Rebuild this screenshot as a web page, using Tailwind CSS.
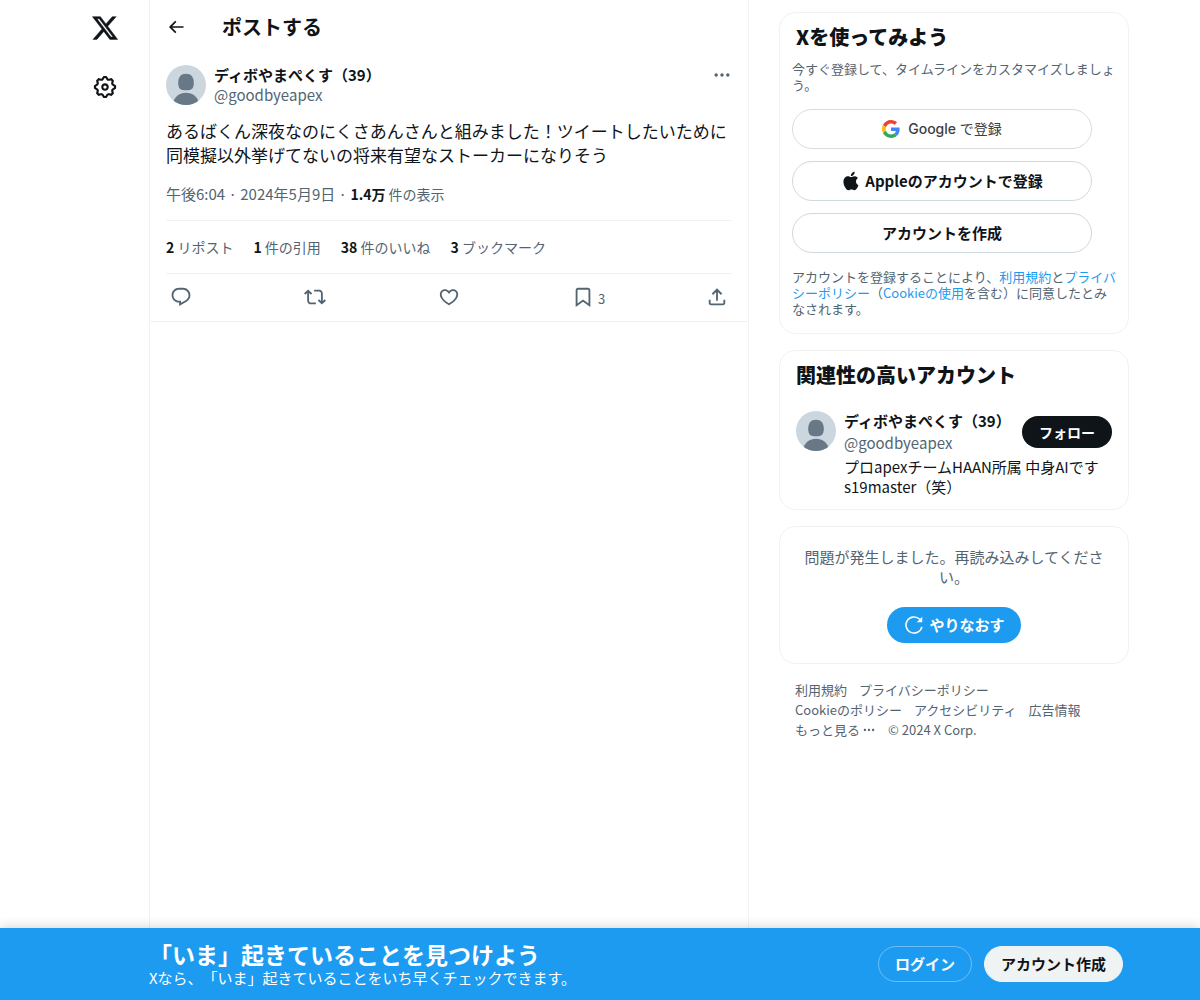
<!DOCTYPE html>
<html lang="ja">
<head>
<meta charset="utf-8">
<meta name="viewport" content="width=device-width, initial-scale=1">
<title>ポストする / X</title>
<script src="https://cdn.jsdelivr.net/npm/@tailwindcss/browser@4"></script>
</head>
<body class="flex min-h-screen flex-col bg-white font-['Noto_Sans_CJK_JP',sans-serif] text-[15px] leading-5 text-[#0f1419] [text-spacing-trim:space-all]">

<svg class="hidden" aria-hidden="true">
  <symbol id="avatar" viewBox="0 0 40 40">
    <rect width="40" height="40" fill="#cbd6df"/>
    <path d="M20 8.800c5 0 7.800 3.200 7.800 9.200 0 5.300-2 7.300-7.800 7.300s-7.800-2-7.800-7.300C12.200 12 15 8.800 20 8.800Z" fill="#687886"/>
    <path d="M7 38C8.500 31.500 13.500 27.700 20 27.700S31.500 31.500 33 38v2H7Z" fill="#687886"/>
  </symbol>
</svg>

<div class="mx-auto flex w-full max-w-[1058px] grow">
  <nav class="flex w-[78px] shrink-0 flex-col">
    <div class="flex w-[68px] flex-col items-center gap-8 pt-3.5">
      <a href="#" aria-label="X">
        <svg class="size-7" viewBox="0 0 24 24" fill="currentColor" stroke="currentColor" stroke-width=".4"><path d="M18.244 2.250h3.308l-7.227 8.260 8.502 11.240H16.170l-5.214-6.817L4.990 21.750H1.680l7.730-8.835L1.254 2.250H8.080l4.713 6.231zm-1.161 17.520h1.833L7.084 4.126H5.117z"/></svg>
      </a>
      <a href="#" aria-label="設定">
        <svg class="size-[26px]" viewBox="0 0 24 24" fill="currentColor"><path d="M10.540 1.750h2.920l1.570 2.360c.11.170.32.250.53.210l2.530-.59 2.170 2.170-.58 2.540c-.05.200.040.410.210.530l2.360 1.570v2.920l-2.360 1.570c-.17.120-.26.330-.21.530l.58 2.540-2.170 2.170-2.530-.59c-.21-.04-.42.040-.53.210l-1.570 2.360h-2.920l-1.580-2.360c-.11-.17-.32-.25-.52-.21l-2.540.59-2.170-2.170.58-2.540c.050-.2-.03-.41-.21-.53l-2.350-1.570v-2.920L4.100 8.970c.18-.12.260-.33.210-.53L3.730 5.900 5.900 3.730l2.540.59c.2.040.41-.04.520-.21l1.580-2.360zm1.070 2l-.98 1.470C10.050 6.080 9 6.500 7.990 6.270l-1.460-.34-.6.600.33 1.460c.24 1.010-.18 2.070-1.050 2.640l-1.460.98v.780l1.460.98c.87.570 1.290 1.630 1.050 2.640l-.33 1.460.6.600 1.460-.34c1.010-.23 2.060.190 2.640 1.050l.98 1.470h.780l.97-1.470c.58-.86 1.630-1.280 2.650-1.050l1.450.34.610-.6-.34-1.460c-.23-1.010.18-2.070 1.050-2.640l1.470-.98v-.78l-1.470-.98c-.87-.57-1.280-1.630-1.050-2.640l.34-1.460-.61-.6-1.450.34c-1.020.230-2.070-.19-2.650-1.050l-.97-1.470h-.78zM12 10.500c-.83 0-1.500.670-1.500 1.500s.67 1.500 1.500 1.500c.82 0 1.500-.67 1.500-1.500s-.68-1.500-1.500-1.500zM8.500 12c0-1.930 1.560-3.500 3.500-3.500 1.930 0 3.500 1.570 3.500 3.500s-1.570 3.500-3.500 3.500c-1.940 0-3.500-1.570-3.500-3.500z"/></svg>
      </a>
    </div>
  </nav>

  <main class="min-w-0 max-w-[600px] flex-1 border-x border-[#eff3f4]">
    <header class="flex h-[53px] items-center px-4">
      <button type="button" aria-label="戻る" class="w-14">
        <svg class="size-5" viewBox="0 0 24 24" fill="currentColor"><path d="M7.414 13l5.043 5.040-1.414 1.420L3.586 12l7.457-7.460 1.414 1.420L7.414 11H21v2H7.414z"/></svg>
      </button>
      <h1 class="text-xl font-bold">ポストする</h1>
    </header>

    <article class="border-b border-[#eff3f4] px-4 pt-3">
      <div class="flex gap-2">
        <svg class="size-10 shrink-0 rounded-full"><use href="#avatar"/></svg>
        <div class="min-w-0 grow">
          <a href="#" class="block font-bold">ディボやまぺくす（39）</a>
          <a href="#" class="block text-[#536471]">@goodbyeapex</a>
        </div>
        <button type="button" aria-label="もっと見る" class="size-5 shrink-0">
          <svg class="size-5" viewBox="0 0 24 24" fill="#536471"><path d="M3 12c0-1.100.9-2 2-2s2 .9 2 2-.9 2-2 2-2-.9-2-2zm9 2c1.100 0 2-.9 2-2s-.9-2-2-2-2 .9-2 2 .9 2 2 2zm7 0c1.100 0 2-.9 2-2s-.9-2-2-2-2 .9-2 2 .9 2 2 2z"/></svg>
        </button>
      </div>
      <p class="mt-3.5 text-[17px] leading-6">あるばくん深夜なのにくさあんさんと組みました！ツイートしたいために同模擬以外挙げてないの将来有望なストーカーになりそう</p>
      <div class="mt-[17px] text-[#536471]"><a href="#">午後6:04 · 2024年5月9日</a> · <span class="text-sm"><b class="text-[#0f1419]">1.4万</b> 件の表示</span></div>
      <div class="mt-4 flex flex-wrap gap-x-5 border-y border-[#eff3f4] py-4 text-sm leading-5 text-[#536471]">
        <a href="#"><b class="text-[#0f1419]">2</b> リポスト</a>
        <a href="#"><b class="text-[#0f1419]">1</b> 件の引用</a>
        <a href="#"><b class="text-[#0f1419]">38</b> 件のいいね</a>
        <a href="#"><b class="text-[#0f1419]">3</b> ブックマーク</a>
      </div>
      <div class="flex h-[47px] items-center px-1 pb-0.5 text-[13px] text-[#536471]">
        <div class="flex flex-1"><button type="button" aria-label="返信"><svg class="size-[22px]" viewBox="0 0 24 24" fill="currentColor"><path d="M1.751 10c0-4.420 3.584-8 8.005-8h4.366c4.490 0 8.129 3.640 8.129 8.130 0 2.960-1.607 5.680-4.196 7.110l-8.054 4.460v-3.690h-.067c-4.490.1-8.183-3.510-8.183-8.010zm8.005-6c-3.317 0-6.005 2.690-6.005 6 0 3.370 2.770 6.080 6.138 6.010l.351-.01h1.761v2.300l5.087-2.810c1.951-1.080 3.163-3.130 3.163-5.360 0-3.390-2.744-6.130-6.129-6.130H9.756z"/></svg></button></div>
        <div class="flex flex-1"><button type="button" aria-label="リポスト"><svg class="size-[22px]" viewBox="0 0 24 24" fill="currentColor"><path d="M4.500 3.880l4.432 4.140-1.364 1.460L5.500 7.550V16c0 1.100.896 2 2 2H13v2H7.500c-2.209 0-4-1.790-4-4V7.550L1.432 9.480.068 8.020 4.500 3.880zM16.500 6H11V4h5.500c2.209 0 4 1.790 4 4v8.450l2.068-1.930 1.364 1.460-4.432 4.140-4.432-4.140 1.364-1.460 2.068 1.930V8c0-1.100-.896-2-2-2z"/></svg></button></div>
        <div class="flex flex-1"><button type="button" aria-label="いいね"><svg class="size-[22px]" viewBox="0 0 24 24" fill="currentColor"><path d="M16.697 5.500c-1.222-.06-2.679.510-3.890 2.160l-.805 1.090-.806-1.090C9.984 6.010 8.526 5.440 7.304 5.500c-1.243.070-2.349.780-2.910 1.910-.552 1.120-.633 2.780.479 4.820 1.074 1.970 3.257 4.270 7.129 6.610 3.870-2.340 6.052-4.640 7.126-6.610 1.111-2.040 1.030-3.700.477-4.820-.561-1.130-1.666-1.840-2.908-1.910zm4.187 7.690c-1.351 2.480-4.001 5.120-8.379 7.670l-.503.300-.504-.3c-4.379-2.550-7.029-5.190-8.382-7.670-1.360-2.500-1.410-4.860-.514-6.670.887-1.790 2.647-2.910 4.601-3.010 1.651-.09 3.368.560 4.798 2.010 1.429-1.450 3.146-2.100 4.796-2.010 1.954.1 3.714 1.220 4.601 3.010.896 1.810.846 4.170-.514 6.670z"/></svg></button></div>
        <div class="flex flex-1"><button type="button" class="flex items-center gap-1" aria-label="ブックマーク 3"><svg class="size-[22px]" viewBox="0 0 24 24" fill="currentColor"><path d="M4 4.500C4 3.120 5.119 2 6.500 2h11C18.881 2 20 3.120 20 4.500v18.440l-8-5.710-8 5.710V4.500zM6.500 4c-.276 0-.5.220-.5.500v14.560l6-4.290 6 4.290V4.500c0-.28-.224-.5-.5-.5h-11z"/></svg><span class="pt-1">3</span></button></div>
        <button type="button" aria-label="共有"><svg class="size-[22px]" viewBox="0 0 24 24" fill="currentColor"><path d="M12 2.590l5.700 5.700-1.410 1.420L13 6.410V16h-2V6.410l-3.300 3.300-1.410-1.420L12 2.590zM21 15l-.02 3.510c0 1.380-1.120 2.490-2.500 2.490H5.500C4.110 21 3 19.880 3 18.500V15h2v3.500c0 .28.220.5.500.5h12.980c.28 0 .5-.22.500-.5L19 15h2z"/></svg></button>
      </div>
    </article>
  </main>

  <aside class="ml-[30px] flex w-[350px] shrink-0 flex-col gap-4 pt-3 pb-4">
    <section class="rounded-2xl border border-[#eff3f4] pt-2.5 pr-2 pb-4 pl-3">
      <h2 class="px-1 text-xl leading-7 font-extrabold">Xを使ってみよう</h2>
      <p class="mt-2.5 text-[13px] leading-4 text-[#536471]">今すぐ登録して、タイムラインをカスタマイズしましょう。</p>
      <div class="mt-4 flex max-w-[300px] flex-col gap-3">
        <button type="button" class="flex h-10 items-center justify-center gap-2 rounded-full border border-[#dadce0] font-['Inter','Noto_Sans_CJK_JP',sans-serif] text-sm font-medium text-[#3c4043]">
          <svg class="size-[18px]" viewBox="0 0 48 48"><path fill="#EA4335" d="M24 9.500c3.540 0 6.710 1.220 9.210 3.600l6.850-6.850C35.900 2.380 30.470 0 24 0 14.620 0 6.510 5.380 2.560 13.220l7.980 6.190C12.430 13.720 17.740 9.500 24 9.500z"/><path fill="#4285F4" d="M46.980 24.550c0-1.570-.15-3.090-.38-4.550H24v9.020h12.940c-.58 2.960-2.260 5.480-4.780 7.180l7.730 6c4.510-4.180 7.090-10.360 7.090-17.650z"/><path fill="#FBBC05" d="M10.530 28.590c-.48-1.450-.76-2.990-.76-4.590s.27-3.140.76-4.590l-7.980-6.190C.92 16.460 0 20.120 0 24c0 3.880.92 7.540 2.560 10.780l7.970-6.190z"/><path fill="#34A853" d="M24 48c6.480 0 11.930-2.130 15.890-5.810l-7.730-6c-2.150 1.450-4.920 2.300-8.160 2.300-6.260 0-11.570-4.220-13.470-9.910l-7.980 6.190C6.510 42.620 14.620 48 24 48z"/></svg>
          <span>Google <span class="font-normal">で登録</span></span>
        </button>
        <button type="button" class="flex h-10 items-center justify-center gap-1 rounded-full border border-[#cfd9de] font-bold">
          <svg class="size-5" viewBox="0 0 24 24" fill="currentColor"><path d="M16.365 1.430c0 1.140-.493 2.270-1.177 3.080-.744.900-1.990 1.570-2.987 1.570-.12 0-.23-.02-.3-.03-.01-.06-.04-.22-.04-.39 0-1.150.572-2.270 1.206-2.980.804-.94 2.142-1.640 3.248-1.680.03.130.050.280.050.430zm4.565 15.710c-.03.070-.463 1.580-1.518 3.120-.945 1.340-1.940 2.710-3.430 2.710-1.517 0-1.900-.88-3.630-.88-1.698 0-2.302.910-3.670.910-1.377 0-2.332-1.260-3.428-2.800-1.287-1.820-2.323-4.630-2.323-7.280 0-4.280 2.797-6.550 5.552-6.550 1.448 0 2.675.950 3.600.950.865 0 2.222-1.010 3.902-1.010.613 0 2.886.060 4.374 2.190-.13.090-2.383 1.370-2.383 4.190 0 3.260 2.854 4.420 2.955 4.450z"/></svg>
          <span>Appleのアカウントで登録</span>
        </button>
        <button type="button" class="h-10 rounded-full border border-[#cfd9de] font-bold">アカウントを作成</button>
      </div>
      <p class="mt-4 text-[13px] leading-4 text-[#536471]">アカウントを登録することにより、<a href="#" class="text-[#1d9bf0]">利用規約</a>と<a href="#" class="text-[#1d9bf0]">プライバシーポリシー</a>（<a href="#" class="text-[#1d9bf0]">Cookieの使用</a>を含む）に同意したとみなされます。</p>
    </section>

    <section class="rounded-2xl border border-[#eff3f4] px-4 pt-2.5 pb-3">
      <h2 class="text-xl leading-7 font-extrabold">関連性の高いアカウント</h2>
      <div class="mt-[22px] flex gap-2">
        <svg class="size-10 shrink-0 rounded-full"><use href="#avatar"/></svg>
        <div class="min-w-0 grow">
          <div class="flex items-center justify-between">
            <div class="flex min-w-0 flex-col gap-0.5">
              <a href="#" class="font-bold">ディボやまぺくす（39）</a>
              <a href="#" class="text-[#536471]">@goodbyeapex</a>
            </div>
            <button type="button" class="h-8 w-[90px] shrink-0 rounded-full bg-[#0f1419] text-sm font-bold text-white">フォロー</button>
          </div>
          <p class="mt-1">プロapexチームHAAN所属 中身AIです s19master（笑）</p>
        </div>
      </div>
    </section>

    <section class="flex flex-col items-center gap-5 rounded-2xl border border-[#eff3f4] p-5">
      <p class="text-center text-[#536471]">問題が発生しました。再読み込みしてください。</p>
      <button type="button" class="flex h-9 items-center gap-1 rounded-full bg-[#1d9bf0] px-4 font-bold text-white">
        <svg class="size-[22px]" viewBox="0 0 24 24" fill="none" stroke="currentColor" stroke-width="1.700"><path d="M20.600 14A8.800 8.800 0 1 1 18.300 5.800l1 1"/><path d="M21 3v6h-6z" fill="currentColor" stroke="none"/></svg>
        <span>やりなおす</span>
      </button>
    </section>

    <nav class="flex flex-wrap gap-x-3 pr-10 pl-4 text-[13px] text-[#536471]">
      <a href="#">利用規約</a>
      <a href="#">プライバシーポリシー</a>
      <a href="#">Cookieのポリシー</a>
      <a href="#">アクセシビリティ</a>
      <a href="#">広告情報</a>
      <button type="button" class="flex items-center gap-0.5">もっと見る <svg class="size-[14px]" viewBox="0 0 24 24" fill="currentColor"><path d="M3 12c0-1.100.9-2 2-2s2 .9 2 2-.9 2-2 2-2-.9-2-2zm9 2c1.100 0 2-.9 2-2s-.9-2-2-2-2 .9-2 2 .9 2 2 2zm7 0c1.100 0 2-.9 2-2s-.9-2-2-2-2 .9-2 2 .9 2 2 2z"/></svg></button>
      <span>© 2024 X Corp.</span>
    </nav>
  </aside>
</div>

<footer class="sticky bottom-0 bg-[#1d9bf0] text-white shadow-[0_0_12px_rgba(0,0,0,0.2)]">
  <div class="mx-auto flex w-full max-w-[1058px] items-center justify-between py-3 pr-1.5 pl-[78px]">
    <div>
      <p class="text-[23px] leading-7 font-bold">「いま」起きていることを見つけよう</p>
      <p>Xなら、「いま」起きていることをいち早くチェックできます。</p>
    </div>
    <div class="flex shrink-0 gap-3">
      <a href="#" class="flex h-9 items-center rounded-full border border-white/35 px-4 font-bold">ログイン</a>
      <a href="#" class="flex h-9 items-center rounded-full border border-[#eff3f4] bg-[#eff3f4] px-4 font-bold text-[#0f1419]">アカウント作成</a>
    </div>
  </div>
</footer>
</body>
</html>
